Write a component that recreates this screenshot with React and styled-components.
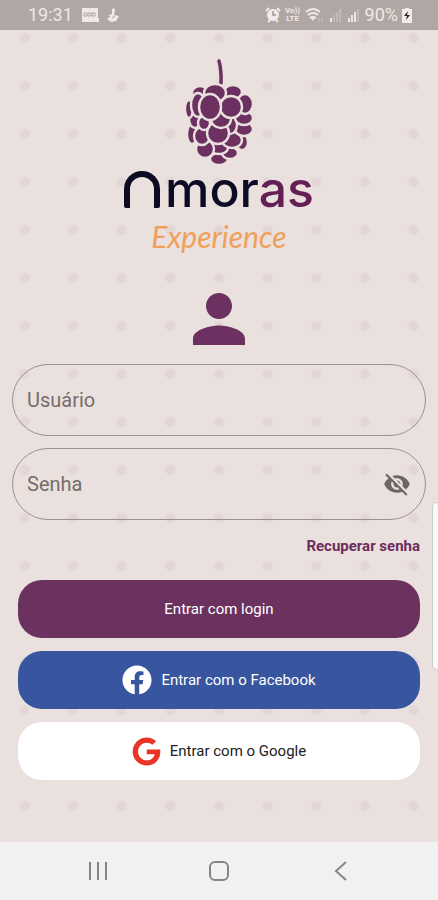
import { useState } from "react";
import styled, { createGlobalStyle } from "styled-components";
import { FaFacebook, FaGoogle } from "react-icons/fa";
import { MdVisibility, MdVisibilityOff } from "react-icons/md";

const berries = [
  [49, 109, 9, 6],
  [60, 103, 8, 6],
  [72, 92, 6, 8],
  [49, 98, 9, 6],
  [22, 84, 5, 10],
  [35, 99, 9, 9],
  [62, 90, 10, 8],
  [32, 86, 8, 9],
  [74, 79, 9, 7],
  [60, 75, 7, 9],
  [48, 83, 11, 11],
  [25, 69, 6, 9],
  [34, 73, 6, 7],
  [74, 68, 9, 7],
  [51, 69, 10, 9],
  [19, 59, 4, 9],
  [30, 43, 8, 7],
  [63, 42, 9, 7],
  [45, 43, 11, 9],
  [75, 54, 8, 10],
  [28, 55, 7, 12],
  [61, 57, 11, 11],
  [40, 57, 11, 13],
];

const BerryLogo = () => (
  <svg width="70" height="108" viewBox="14 8 70 108" aria-hidden="true">
    <path
      d="M49 11 Q51.500 20 51 33"
      fill="none"
      stroke="#6c3160"
      strokeWidth="3.500"
      strokeLinecap="round"
    />
    {berries.map(([cx, cy, rx, ry]) => (
      <ellipse
        key={`${cx}-${cy}`}
        cx={cx}
        cy={cy}
        rx={rx}
        ry={ry}
        fill="#6c3160"
        stroke="#eae1df"
        strokeWidth="2.400"
      />
    ))}
  </svg>
);

const StatusBar = () => (
  <StatusWrapper>
    <div className="group">
      <span>19:31</span>
      <svg width="18" height="14" viewBox="0 0 18 14" fill="#eee9e8">
        <path d="M1 0h16v10h1v4H1z" />
        <path
          d="M3 5h3v3H3zM7 5h3v3H7zM11 5h3v3h-3z"
          fill="none"
          stroke="#b0a6a4"
        />
      </svg>
      <svg width="12" height="14" viewBox="0 0 12 14" fill="#eee9e8">
        <path d="M5 1q3-2 3 2l-1 4 5 1-3 5-5 1-4-3 3-2-1-2 3-1z" />
        <path d="M5 10l3-2" stroke="#b0a6a4" />
      </svg>
    </div>
    <div className="group right">
      <svg width="16" height="16" viewBox="0 0 16 16">
        <circle cx="8" cy="8" r="6" fill="#f1eceb" />
        <path
          d="M1 4l3-3M15 4l-3-3M3 15l2-2M13 15l-2-2"
          stroke="#f1eceb"
          strokeWidth="2"
        />
        <path d="M8 4v4h3" fill="none" stroke="#a0918f" strokeWidth="1.500" />
      </svg>
      <Volte>
        <span>Vo))</span>
        <span>LTE</span>
      </Volte>
      <svg width="20" height="16" viewBox="0 0 20 16" fill="none">
        <path
          d="M1 5q7-6 14 0M3 8q5-4 10 0M5 11q3-2 6 0"
          stroke="#eee9e8"
          strokeWidth="2"
        />
        <path d="M8 14l-2-3h4z" fill="#eee9e8" />
        <path d="M14 15v-4M17 15v-4" stroke="#cec6c4" />
      </svg>
      <SignalBars level={1} />
      <SignalBars level={3} />
      <span>90%</span>
      <svg width="10" height="15" viewBox="0 0 10 15">
        <path d="M3 0h4v1h3v14H0V1h3z" fill="#f1eceb" />
        <path d="M6 3L2 8h3l-1 4 4-5H5z" fill="#292424" />
      </svg>
    </div>
  </StatusWrapper>
);

const SignalBars = ({ level }) => (
  <svg width="14" height="14" viewBox="0 0 14 14">
    {[0, 1, 2, 3].map((bar) => (
      <rect
        key={bar}
        x={1 + bar * 3}
        y={10 - bar * 3}
        width="2"
        height={4 + bar * 3}
        fill={bar < level ? "#eee9e8" : "#c3bab8"}
      />
    ))}
  </svg>
);

const App = () => {
  const [user, setUser] = useState("");
  const [password, setPassword] = useState("");
  const [showPassword, setShowPassword] = useState(false);

  return (
    <Screen>
      <GlobalStyle />
      <StatusBar />
      <Content>
        <BerryLogo />
        <Wordmark aria-label="Amoras">
          <Arch />
          <span>
            mor<em>as</em>
          </span>
        </Wordmark>
        <Tagline>Experience</Tagline>
        <UserIcon viewBox="4 4 16 16" aria-hidden="true">
          <path d="M12 12c2.210 0 4-1.790 4-4s-1.790-4-4-4-4 1.790-4 4 1.790 4 4 4zm0 2c-2.670 0-8 1.340-8 4v2h16v-2c0-2.660-5.330-4-8-4z" />
        </UserIcon>
        <LoginForm onSubmit={(e) => e.preventDefault()}>
          <Field>
            <input
              type="text"
              aria-label="Usuário"
              placeholder="Usuário"
              value={user}
              onChange={(e) => setUser(e.target.value)}
            />
          </Field>
          <Field>
            <input
              type={showPassword ? "text" : "password"}
              aria-label="Senha"
              placeholder="Senha"
              value={password}
              onChange={(e) => setPassword(e.target.value)}
            />
            <button
              type="button"
              aria-label="Mostrar senha"
              onClick={() => setShowPassword(!showPassword)}
            >
              {showPassword ? (
                <MdVisibility size={28} />
              ) : (
                <MdVisibilityOff size={28} />
              )}
            </button>
          </Field>
          <RecoverLink href="#recuperar">Recuperar senha</RecoverLink>
          <Actions>
            <ActionButton type="submit" $bg="#6c325f">
              Entrar com login
            </ActionButton>
            <ActionButton type="button" $bg="#38559f">
              <FaFacebook size={30} />
              Entrar com o Facebook
            </ActionButton>
            <ActionButton type="button" $bg="#fff" $color="#222">
              <FaGoogle size={29} color="#ea3526" />
              Entrar com o Google
            </ActionButton>
          </Actions>
        </LoginForm>
      </Content>
      <NavBar>
        <button aria-label="Recentes">
          <svg width="22" height="22" viewBox="0 0 22 22">
            <path d="M3 2v18M11 2v18M19 2v18" />
          </svg>
        </button>
        <button aria-label="Início">
          <svg width="22" height="22" viewBox="0 0 22 22">
            <rect x="2" y="2" width="18" height="18" rx="5" />
          </svg>
        </button>
        <button aria-label="Voltar">
          <svg width="22" height="22" viewBox="0 0 22 22">
            <path d="M17 2L7 11l10 9" />
          </svg>
        </button>
      </NavBar>
      <EdgeHandle />
    </Screen>
  );
};

const GlobalStyle = createGlobalStyle`
  * {
    box-sizing: border-box;
    margin: 0;
    padding: 0;
  }
  body {
    font-family: Roboto, "Liberation Sans", sans-serif;
  }
  button {
    font: inherit;
    border: none;
    background: none;
    cursor: pointer;
  }
`;

const Screen = styled.div`
  position: relative;
  display: flex;
  flex-direction: column;
  min-height: 100vh;
  overflow: hidden;
  background: #eae1df;
`;

const StatusWrapper = styled.header`
  display: flex;
  justify-content: space-between;
  align-items: center;
  height: 30px;
  padding: 0 26px 0 28px;
  background: #b0a6a4;
  color: #eee9e8;
  font-size: 18px;
  line-height: 30px;
  .group {
    display: flex;
    align-items: center;
    gap: 8px;
  }
  .right {
    gap: 4px;
  }
`;

const Volte = styled.span`
  display: flex;
  flex-direction: column;
  align-items: center;
  width: 16px;
  font-size: 8px;
  line-height: 8px;
  font-weight: 700;
`;

const Content = styled.main`
  flex: 1;
  display: flex;
  flex-direction: column;
  align-items: center;
  padding: 28px 12px 62px;
  background-image: radial-gradient(circle, #e2d6d6 4px, transparent 6px);
  background-size: calc(100% / 9) 48px;
  background-position: 0 -16px;
`;

const Wordmark = styled.h1`
  display: flex;
  align-items: flex-end;
  gap: 5px;
  height: 48px;
  color: #0d0b24;
  font-family: Inter, sans-serif;
  font-size: 50px;
  line-height: 50px;
  font-weight: 500;
  em {
    font-style: normal;
    color: #642055;
  }
`;

const Arch = styled.span`
  width: 36px;
  height: 37px;
  margin-bottom: 6px;
  border: 6px solid #0d0b24;
  border-bottom: none;
  border-radius: 18px 18px 2px 2px;
`;

const Tagline = styled.p`
  margin-top: 6px;
  color: #f0a058;
  font-family: Lato, sans-serif;
  font-size: 30px;
  line-height: 32px;
  font-style: italic;
`;

const UserIcon = styled.svg`
  width: 52px;
  height: 52px;
  margin-top: 41px;
  fill: #6c3160;
`;

const LoginForm = styled.form`
  display: flex;
  flex-direction: column;
  gap: 12px;
  width: 100%;
  margin-top: 19px;
`;

const Field = styled.div`
  display: flex;
  align-items: center;
  height: 72px;
  padding: 0 14px;
  border: 1px solid #9b908e;
  border-radius: 36px;
  input {
    flex: 1;
    min-width: 0;
    height: 100%;
    border: none;
    outline: none;
    background: transparent;
    font: inherit;
    font-size: 20px;
    color: #3b3333;
  }
  input::placeholder {
    color: #766c6a;
    opacity: 1;
  }
  button {
    display: flex;
    color: #6f6664;
  }
`;

const RecoverLink = styled.a`
  align-self: flex-end;
  margin: 4px 6px 0;
  color: #6c2c5c;
  font-size: 15px;
  line-height: 20px;
  font-weight: 700;
  text-decoration: none;
`;

const Actions = styled.div`
  display: flex;
  flex-direction: column;
  gap: 13px;
  margin: 12px 6px 0;
`;

const ActionButton = styled.button`
  display: flex;
  justify-content: center;
  align-items: center;
  gap: 9px;
  height: 58px;
  border-radius: 24px;
  background: ${({ $bg }) => $bg};
  color: ${({ $color }) => $color || "#fff"};
  font-size: 15px;
`;

const NavBar = styled.nav`
  display: grid;
  grid-template-columns: repeat(3, 1fr);
  height: 58px;
  padding: 0 37px;
  background: #f1f1f1;
  button {
    display: flex;
    justify-content: center;
    align-items: center;
  }
  svg {
    fill: none;
    stroke: #858585;
    stroke-width: 2;
  }
`;

const EdgeHandle = styled.div`
  position: absolute;
  top: 502px;
  right: -4px;
  width: 10px;
  height: 168px;
  border: 1px solid #cfc9c8;
  border-radius: 6px;
  background: #fafafa;
`;

export default App;
